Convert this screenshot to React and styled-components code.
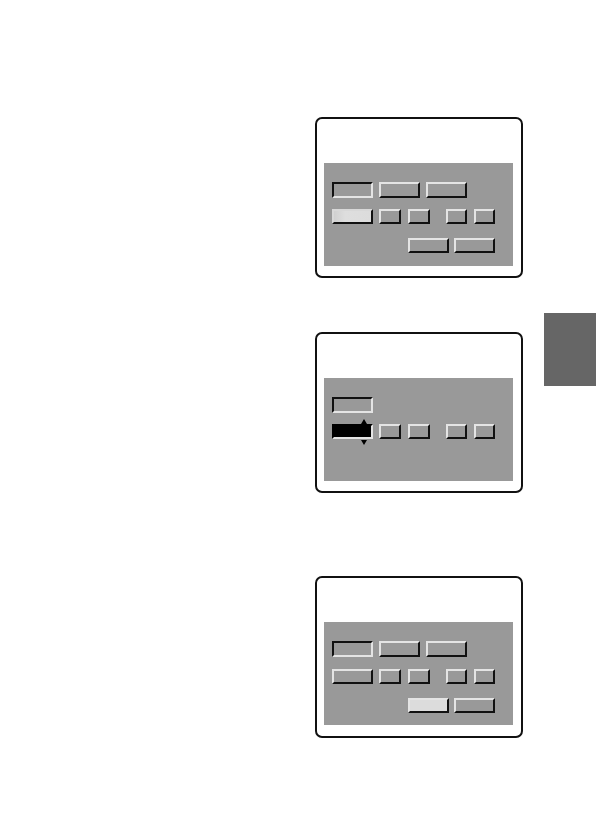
import React from 'react'
import styled, { createGlobalStyle, css } from 'styled-components'

const Global = createGlobalStyle`
  html, body {
    margin: 0;
    padding: 0;
    background: #fff;
    font-family: "Liberation Sans", Arial, sans-serif;
  }
`

const Page = styled.div`
  width: 596px;
  height: 840px;
  display: flex;
  align-items: flex-start;
  overflow: hidden;
`

const Column = styled.div`
  margin-left: 315px;
  width: 208px;
  display: flex;
  flex-direction: column;
`

const Screen = styled.div`
  box-sizing: border-box;
  width: 208px;
  height: ${p => p.h || 161}px;
  margin-top: ${p => p.top}px;
  border: 2px solid #111;
  border-radius: 7px;
  padding: 44px 8px 0 7px;
`

const Field = styled.div`
  box-sizing: border-box;
  width: 189px;
  height: 103px;
  background: #999;
  padding: 19px 0 0 8px;
  display: flex;
  flex-direction: column;
`

const Row = styled.div`
  display: flex;
  align-items: flex-start;
  height: ${p => p.h || 15}px;
  margin-top: ${p => p.mt || 0}px;
  padding-left: ${p => p.indent || 0}px;
`

const raised = css`
  border-top-color: #e4e4e4;
  border-left-color: #e4e4e4;
  border-right-color: #111;
  border-bottom-color: #111;
`

const sunken = css`
  border-top-color: #111;
  border-left-color: #111;
  border-right-color: #e4e4e4;
  border-bottom-color: #e4e4e4;
`

const Key = styled.div`
  position: relative;
  box-sizing: border-box;
  width: ${p => p.w || 41}px;
  height: 100%;
  margin-left: ${p => p.gap || 0}px;
  border: 2px solid;
  background: ${p => p.fill || '#999'};
  ${p => (p.down ? sunken : raised)}
`

const Selected = styled(Key)`
  background: linear-gradient(to right, #d0d0d0, #dedede 30%, #dcdcdc);
  border-color: #d8d8d8 #111 #111 #d8d8d8;
`

const Active = styled(Key)`
  background: #000;
  border-color: #000 #e4e4e4 #e4e4e4 #000;
`

const Arrow = styled.span`
  position: absolute;
  left: 27px;
  width: 0;
  height: 0;
  border-left: 3px solid transparent;
  border-right: 3px solid transparent;
  ${p =>
    p.up
      ? css`
          top: -7px;
          border-bottom: 5px solid #000;
        `
      : css`
          bottom: -8px;
          border-top: 5px solid #000;
        `}
`

const Tab = styled.div`
  width: 52px;
  height: 73px;
  margin-top: 313px;
  margin-left: 21px;
  background: #666;
`

const DigitKeys = () => (
  <>
    <Key w={22} gap={6} />
    <Key w={22} gap={7} />
    <Key w={21} gap={16} />
    <Key w={21} gap={7} />
  </>
)

const App = () => {
  return (
    <Page>
      <Global />
      <Column>
        <Screen top={117}>
          <Field>
            <Row h={16}>
              <Key down />
              <Key gap={6} />
              <Key gap={6} />
            </Row>
            <Row mt={11}>
              <Selected />
              <DigitKeys />
            </Row>
            <Row mt={14} indent={76}>
              <Key />
              <Key gap={5} />
            </Row>
          </Field>
        </Screen>

        <Screen top={54}>
          <Field>
            <Row h={16}>
              <Key down />
            </Row>
            <Row mt={11}>
              <Active>
                <Arrow up />
                <Arrow />
              </Active>
              <DigitKeys />
            </Row>
          </Field>
        </Screen>

        <Screen top={83} h={162}>
          <Field>
            <Row h={16}>
              <Key down />
              <Key gap={6} />
              <Key gap={6} />
            </Row>
            <Row mt={12}>
              <Key />
              <DigitKeys />
            </Row>
            <Row mt={14} indent={76}>
              <Key fill="#dcdcdc" />
              <Key gap={5} />
            </Row>
          </Field>
        </Screen>
      </Column>
      <Tab />
    </Page>
  )
}

export default App
